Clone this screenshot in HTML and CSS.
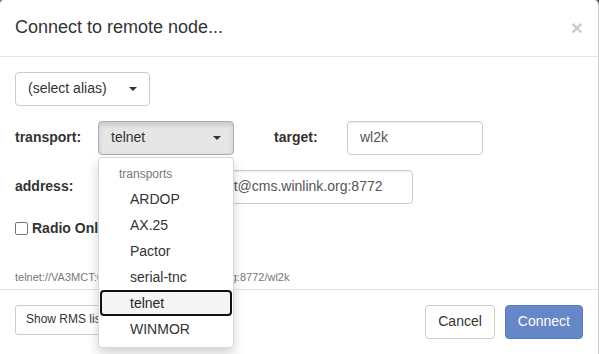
FILE: index.html
```html
<!DOCTYPE html>
<html>
<head>
<meta charset="utf-8">
<link rel="stylesheet" href="styles.css">
</head>
<body>
<div class="modal">
  <div class="modal-header">
    <h4 class="modal-title">Connect to remote node...</h4>
    <span class="close">×</span>
  </div>
  <div class="modal-body">
    <div class="alias-row">
      <div class="btn select-btn alias-btn"><span>(select alias)</span><span class="caret"></span></div>
    </div>
    <div class="form-row">
      <label class="lbl lbl-main">transport:</label>
      <div class="select-wrap">
        <div class="btn select-btn open-btn"><span>telnet</span><span class="caret"></span></div>
        <div class="dropdown-menu">
          <div class="dropdown-header">transports</div>
          <div class="item">ARDOP</div>
          <div class="item">AX.25</div>
          <div class="item">Pactor</div>
          <div class="item">serial-tnc</div>
          <div class="item item-focus">telnet</div>
          <div class="item">WINMOR</div>
        </div>
      </div>
      <label class="lbl lbl-target">target:</label>
      <div class="input input-target">wl2k</div>
    </div>
    <div class="form-row">
      <label class="lbl lbl-main">address:</label>
      <div class="input input-address">VA3MCT:CMSTelnet@cms.winlink.org:8772</div>
    </div>
    <div class="check-row">
      <span class="checkbox"></span>
      <span class="check-label">Radio Only</span>
    </div>
    <div class="url">telnet://VA3MCT:CMSTelnet@cms.winlink.org:8772/wl2k</div>
  </div>
  <div class="modal-footer">
    <div class="btn btn-sm">Show RMS list</div>
    <div class="footer-right">
      <div class="btn">Cancel</div>
      <div class="btn btn-primary">Connect</div>
    </div>
  </div>
</div>
</body>
</html>
```
FILE: styles.css
```css
* { box-sizing: border-box; }
html, body {
  margin: 0;
  padding: 0;
  background: #4a4a4a;
  overflow: hidden;
  height: 354px;
}
body {
  font-family: "Liberation Sans", Arial, sans-serif;
  font-size: 14px;
  line-height: 1.42857;
  color: #333;
}
.modal {
  margin: -1px 0 0 -1px;
  width: 600px;
  height: 360px;
  background: #fff;
  border: 1px solid rgba(0,0,0,.2);
  border-radius: 6px;
}
.modal-header {
  display: flex;
  justify-content: space-between;
  align-items: flex-start;
  padding: 15px;
  border-bottom: 1px solid #e5e5e5;
}
.modal-title {
  margin: 0;
  font-size: 18px;
  font-weight: normal;
  line-height: 1.42857;
  color: #333;
}
.close {
  font-size: 21px;
  font-weight: bold;
  line-height: 1;
  color: #000;
  opacity: .2;
  margin-top: 2px;
}
.modal-body {
  padding: 15px 15px 4px;
}
.btn {
  display: inline-flex;
  align-items: center;
  justify-content: center;
  height: 34px;
  padding: 0 12px;
  border: 1px solid #ccc;
  border-radius: 4px;
  background: #fff;
  color: #333;
  font-size: 14px;
  white-space: nowrap;
}
.select-btn {
  justify-content: space-between;
}
.alias-btn { width: 135px; }
.caret {
  width: 0;
  height: 0;
  border-top: 4px solid #333;
  border-left: 4px solid transparent;
  border-right: 4px solid transparent;
}
.alias-row { display: flex; }
.form-row {
  display: flex;
  align-items: center;
  margin-top: 15px;
}
.lbl {
  font-weight: bold;
  color: #333;
}
.lbl-main { width: 83px; }
.lbl-target { width: 73px; margin-left: 40px; }
.select-wrap {
  position: relative;
  width: 136px;
}
.open-btn {
  width: 136px;
  background: #e6e6e6;
  border-color: #adadad;
  box-shadow: inset 0 3px 5px rgba(0,0,0,.125);
}
.input {
  height: 34px;
  padding: 6px 12px;
  border: 1px solid #ccc;
  border-radius: 4px;
  color: #555;
  box-shadow: inset 0 1px 1px rgba(0,0,0,.075);
  white-space: nowrap;
  overflow: hidden;
}
.input-target { width: 136px; }
.input-address { width: 315px; }
.dropdown-menu {
  position: absolute;
  top: 36px;
  left: 0;
  width: 136px;
  padding: 5px 0;
  background: #fff;
  border: 1px solid rgba(0,0,0,.15);
  border-radius: 4px;
  box-shadow: 0 6px 12px rgba(0,0,0,.175);
  z-index: 10;
}
.dropdown-header {
  padding: 3px 20px;
  font-size: 12px;
  line-height: 1.42857;
  color: #777;
}
.item {
  height: 26px;
  padding: 3px 10px 3px 31px;
  line-height: 20px;
  color: #333;
  white-space: nowrap;
}
.item-focus {
  margin: 0 1px;
  padding: 1px 8px 1px 28px;
  background: #f5f5f5;
  border: 2px solid #111;
  border-radius: 4px;
  color: #262626;
}
.check-row {
  display: flex;
  align-items: center;
  height: 20px;
  margin-top: 15px;
}
.checkbox {
  width: 13px;
  height: 13px;
  border: 1px solid #767676;
  border-radius: 2px;
  margin-right: 4px;
}
.check-label { font-weight: bold; }
.url {
  margin-top: 30px;
  font-size: 11px;
  line-height: 16px;
  color: #777;
}
.modal-footer {
  display: flex;
  justify-content: space-between;
  align-items: flex-start;
  padding: 15px;
  border-top: 1px solid #e5e5e5;
}
.btn-sm {
  height: 30px;
  padding: 0 10px;
  font-size: 12px;
  border-radius: 3px;
}
.footer-right {
  display: flex;
  gap: 10px;
}
.btn-primary {
  background: #6586c7;
  border-color: #5b7cbe;
  color: #fff;
}
```
